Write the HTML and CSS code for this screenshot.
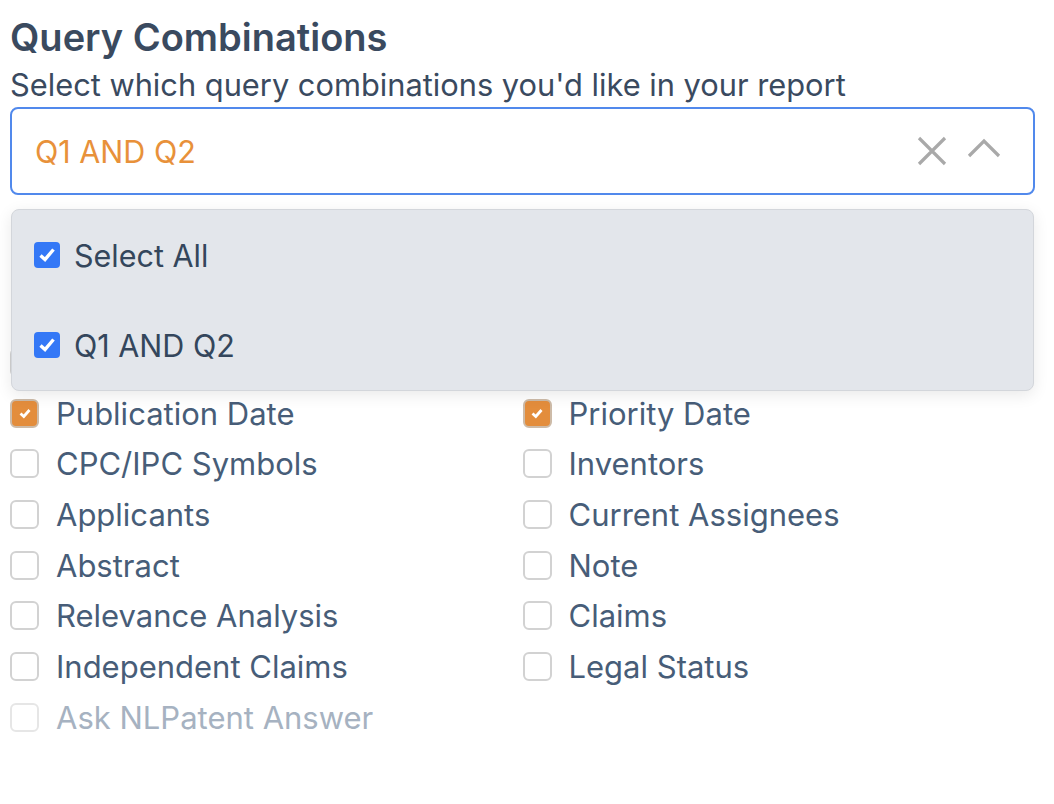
FILE: index.html
```html
<!DOCTYPE html>
<html lang="en">
<head>
    <meta charset="UTF-8">
    <meta name="viewport" content="width=device-width, initial-scale=1.0">
    <title>Report Settings</title>
    <link rel="stylesheet" href="styles.css">
</head>
<body>
    <div class="container">
        <h1 class="title">Query Combinations</h1>
        <p class="subtitle">Select which query combinations you'd like in your report</p>

        <div class="select-wrap">
            <div class="select">
                <span class="select-value">Q1 AND Q2</span>
                <div class="select-icons">
                    <svg class="icon-clear" width="30" height="30" viewBox="0 0 30 30">
                        <path d="M2 2 L28 28 M28 2 L2 28" stroke="#a9a9a9" stroke-width="3.2" fill="none"/>
                    </svg>
                    <svg class="icon-chevron" width="34" height="20" viewBox="0 0 34 20">
                        <path d="M2 18 L17 3 L32 18" stroke="#a9a9a9" stroke-width="3.2" fill="none"/>
                    </svg>
                </div>
            </div>

            <!-- open dropdown menu -->
            <ul class="menu">
                <li class="menu-item">
                    <span class="box box-blue">
                        <svg width="20" height="20" viewBox="0 0 20 20"><path d="M3.5 10.5 L8 14.5 L16.5 4.5" stroke="#fff" stroke-width="3.4" fill="none"/></svg>
                    </span>
                    Select All
                </li>
                <li class="menu-item">
                    <span class="box box-blue">
                        <svg width="20" height="20" viewBox="0 0 20 20"><path d="M3.5 10.5 L8 14.5 L16.5 4.5" stroke="#fff" stroke-width="3.4" fill="none"/></svg>
                    </span>
                    Q1 AND Q2
                </li>
            </ul>
        </div>

        <div class="fields">
            <!-- "select all" row, covered by the open menu -->
            <div class="field"><span class="box"></span></div>

            <div class="field-grid">
                <label class="field"><span class="box box-orange"><svg width="16" height="16" viewBox="0 0 16 16"><path d="M3.5 8.5 L6.8 11.5 L12.5 5" stroke="#fff" stroke-width="2.8" fill="none"/></svg></span>Publication Date</label>
                <label class="field"><span class="box box-orange"><svg width="16" height="16" viewBox="0 0 16 16"><path d="M3.5 8.5 L6.8 11.5 L12.5 5" stroke="#fff" stroke-width="2.8" fill="none"/></svg></span>Priority Date</label>
                <label class="field"><span class="box"></span>CPC/IPC Symbols</label>
                <label class="field"><span class="box"></span>Inventors</label>
                <label class="field"><span class="box"></span>Applicants</label>
                <label class="field"><span class="box"></span>Current Assignees</label>
                <label class="field"><span class="box"></span>Abstract</label>
                <label class="field"><span class="box"></span>Note</label>
                <label class="field"><span class="box"></span>Relevance Analysis</label>
                <label class="field"><span class="box"></span>Claims</label>
                <label class="field"><span class="box"></span>Independent Claims</label>
                <label class="field"><span class="box"></span>Legal Status</label>
                <label class="field disabled"><span class="box"></span>Ask NLPatent Answer</label>
            </div>
        </div>
    </div>
</body>
</html>
```

FILE: styles.css
```css
body {
    font-family: Inter, "Noto Sans", sans-serif;
    background: #fff;
    margin: 0;
    padding: 0;
}

.container {
    padding: 15px 19px 40px 10px;
}

.title {
    font-size: 38px;
    line-height: 44px;
    font-weight: 600;
    color: #3a4a5f;
    margin: 0;
}

.subtitle {
    font-size: 30.8px;
    line-height: 34px;
    color: #3a4a5f;
    margin: 9px 0 5px;
}

.select-wrap {
    position: relative;
}

.select {
    height: 88px;
    box-sizing: border-box;
    border: 2px solid #5189ec;
    border-radius: 8px;
    padding: 0 32px 0 23px;
    display: flex;
    align-items: center;
    justify-content: space-between;
}

.select-value {
    font-size: 30.5px;
    color: #e8913a;
}

.select-icons {
    display: flex;
    align-items: center;
    gap: 20px;
}

.icon-chevron {
    margin-top: -6px;
}

.menu {
    position: absolute;
    top: calc(100% + 14px);
    left: 1px;
    right: 1px;
    z-index: 10;
    list-style: none;
    margin: 0;
    padding: 0;
    background: #e3e6eb;
    border: 1px solid #d3d6db;
    border-radius: 8px;
    box-shadow: 0px 4px 16px rgba(0, 0, 0, 0.09);
}

.menu-item {
    height: 90px;
    display: flex;
    align-items: center;
    gap: 14px;
    padding-left: 22px;
    font-size: 30.5px;
    color: #34465c;
}

.box {
    width: 29px;
    height: 29px;
    box-sizing: border-box;
    border: 2px solid #d2d2d2;
    border-radius: 6px;
    background: #fff;
    display: inline-flex;
    align-items: center;
    justify-content: center;
    flex-shrink: 0;
}

.box-blue {
    width: 26px;
    height: 26px;
    border: none;
    border-radius: 4px;
    background: #3478f6;
}

.box-orange {
    background: #e38d3c;
    border-color: #cdbba8;
}

.fields {
    margin-top: 142px;
}

.field-grid {
    display: grid;
    grid-template-columns: 1fr 1fr;
}

.field {
    height: 50.7px;
    display: flex;
    align-items: center;
    gap: 17px;
    font-size: 31px;
    color: #475d78;
}

.field.disabled {
    color: #a6b2c1;
}

.field.disabled .box {
    border-color: #e6e6e6;
}
```
